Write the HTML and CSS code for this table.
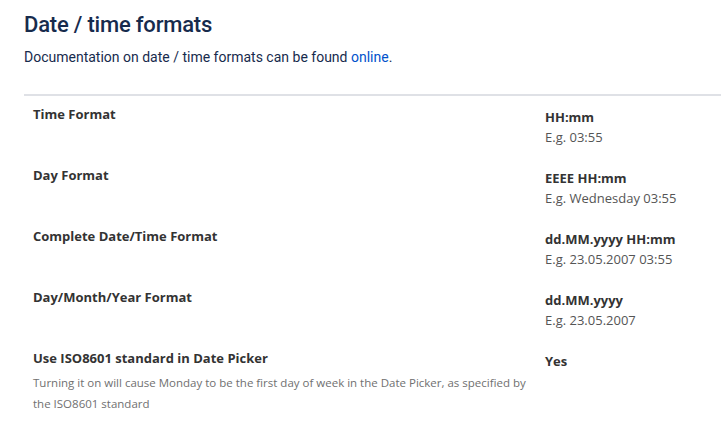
FILE: index.html
```html
<!DOCTYPE html>
<html>
<head>
<meta charset="utf-8">
<link rel="stylesheet" href="styles.css">
</head>
<body>
<div class="page">
  <h1 class="title">Date / time formats</h1>
  <p class="intro">Documentation on date / time formats can be found <a href="#" class="link">online</a>.</p>
  <div class="table">
    <div class="row">
      <div class="label">Time Format</div>
      <div class="value"><div class="fmt">HH:mm</div><div class="example">E.g. 03:55</div></div>
    </div>
    <div class="row">
      <div class="label">Day Format</div>
      <div class="value"><div class="fmt">EEEE HH:mm</div><div class="example">E.g. Wednesday 03:55</div></div>
    </div>
    <div class="row">
      <div class="label">Complete Date/Time Format</div>
      <div class="value"><div class="fmt">dd.MM.yyyy HH:mm</div><div class="example">E.g. 23.05.2007 03:55</div></div>
    </div>
    <div class="row">
      <div class="label">Day/Month/Year Format</div>
      <div class="value"><div class="fmt">dd.MM.yyyy</div><div class="example">E.g. 23.05.2007</div></div>
    </div>
    <div class="row">
      <div class="label-cell">
        <div class="label">Use ISO8601 standard in Date Picker</div>
        <div class="desc">Turning it on will cause Monday to be the first day of week in the Date Picker, as specified by the ISO8601 standard</div>
      </div>
      <div class="value"><div class="fmt">Yes</div></div>
    </div>
  </div>
</div>
</body>
</html>
```
FILE: styles.css
```css
html, body {
  margin: 0;
  padding: 0;
  background: #ffffff;
}
body {
  font-family: "Open Sans", "Noto Sans", sans-serif;
  color: #172b4d;
}
.page {
  padding: 10px 0 0 24px;
}
.title {
  margin: 0;
  font-family: Roboto, "Open Sans", sans-serif;
  font-size: 22px;
  font-weight: 500;
  line-height: 30px;
  letter-spacing: -0.2px;
  color: #172b4d;
}
.intro {
  margin: 7px 0 0 0;
  font-family: Roboto, "Open Sans", sans-serif;
  font-size: 14px;
  line-height: 20px;
  color: #172b4d;
}
.link {
  color: #0052cc;
  text-decoration: none;
}
.table {
  margin-top: 27px;
  border-top: 2px solid #dfe1e6;
}
.row {
  display: grid;
  grid-template-columns: 512px 1fr;
  padding: 8px 0 10px 9px;
  height: 43px;
}
.row:last-child {
  height: auto;
}
.label {
  font-size: 13px;
  font-weight: 700;
  line-height: 20px;
  color: #333333;
}
.value {
  padding-top: 3px;
  font-size: 13px;
  line-height: 20px;
}
.fmt {
  font-weight: 700;
  color: #333333;
}
.example {
  color: #555555;
}
.desc {
  margin-top: 4px;
  font-size: 11.5px;
  line-height: 21px;
  color: #707070;
}
```
